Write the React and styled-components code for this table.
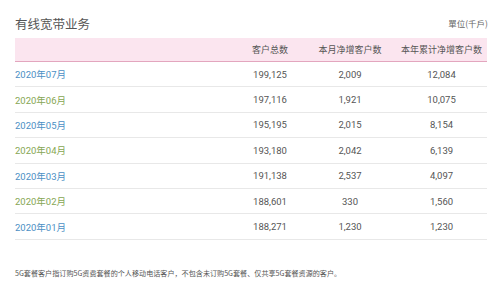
import React from "react";
import styled, { createGlobalStyle } from "styled-components";

const GlobalStyle = createGlobalStyle`
  body {
    margin: 0;
    background: #fff;
    font-family: Roboto, "Noto Sans CJK SC", sans-serif;
  }
`;

const rows = [
  { month: "2020年07月", total: "199,125", monthly: "2,009", yearly: "12,084" },
  { month: "2020年06月", total: "197,116", monthly: "1,921", yearly: "10,075" },
  { month: "2020年05月", total: "195,195", monthly: "2,015", yearly: "8,154" },
  { month: "2020年04月", total: "193,180", monthly: "2,042", yearly: "6,139" },
  { month: "2020年03月", total: "191,138", monthly: "2,537", yearly: "4,097" },
  { month: "2020年02月", total: "188,601", monthly: "330", yearly: "1,560" },
  { month: "2020年01月", total: "188,271", monthly: "1,230", yearly: "1,230" },
];

const App = () => {
  return (
    <Wrapper>
      <GlobalStyle />
      <TitleBar>
        <Title>有线宽带业务</Title>
        <Unit>單位(千戶)</Unit>
      </TitleBar>
      <HeadRow>
        <span></span>
        <HeadCell>客户总数</HeadCell>
        <HeadCell>本月净增客户数</HeadCell>
        <HeadCell last>本年累计净增客户数</HeadCell>
      </HeadRow>
      {rows.map((row, i) => (
        <Row key={row.month}>
          <Month green={i % 2 === 1}>{row.month}</Month>
          <Cell>{row.total}</Cell>
          <Cell>{row.monthly}</Cell>
          <Cell last>{row.yearly}</Cell>
        </Row>
      ))}
      <Note>
        5G套餐客户指订购5G资费套餐的个人移动电话客户，不包含未订购5G套餐、仅共享5G套餐资源的客户。
      </Note>
    </Wrapper>
  );
};

const Wrapper = styled.div`
  width: 472px;
  padding-left: 15px;
`;

const TitleBar = styled.div`
  display: flex;
  justify-content: space-between;
  align-items: center;
  height: 38px;
  padding-top: 8px;
  box-sizing: border-box;
`;

const Title = styled.h1`
  margin: 0;
  font-family: "Noto Sans CJK SC", sans-serif;
  font-size: 12.5px;
  font-weight: 400;
  color: #555;
`;

const Unit = styled.span`
  font-family: "Noto Sans CJK SC", sans-serif;
  font-size: 8.5px;
  color: #666;
  margin-right: -1px;
`;

const grid = `
  display: grid;
  grid-template-columns: 215px 80px 80px 1fr;
  align-items: center;
`;

const HeadRow = styled.div`
  ${grid}
  height: 24px;
  box-sizing: border-box;
  background: #fbe5ef;
  border-bottom: 1.5px solid #e3a6be;
`;

const HeadCell = styled.span`
  text-align: center;
  font-family: "Noto Sans CJK SC", sans-serif;
  font-size: 9px;
  color: #555;
  padding-left: ${(p) => (p.last ? "6px" : "0")};
  white-space: nowrap;
`;

const Row = styled.div`
  ${grid}
  height: 25.4px;
  box-sizing: border-box;
  border-bottom: 1px solid #e8e8e8;
`;

const Month = styled.span`
  font-size: 9.5px;
  color: ${(p) => (p.green ? "#86a653" : "#4b8fc4")};
`;

const Cell = styled.span`
  text-align: center;
  font-size: 9.5px;
  color: #555;
  padding-left: ${(p) => (p.last ? "6px" : "0")};
`;

const Note = styled.p`
  margin: 28px 0 0;
  font-family: "Noto Sans CJK SC", sans-serif;
  font-size: 7.1px;
  color: #555;
  white-space: nowrap;
`;

export default App;
